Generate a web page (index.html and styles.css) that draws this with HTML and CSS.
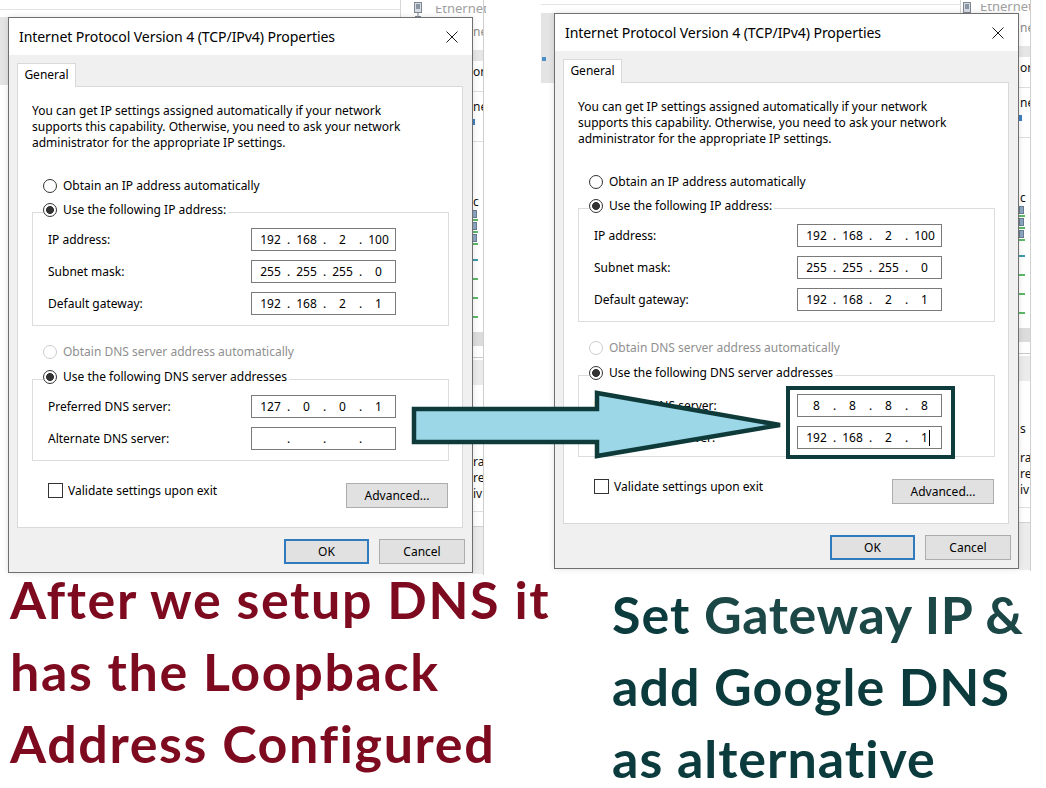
FILE: index.html
```html
<!DOCTYPE html>
<html lang="en">
<head>
<meta charset="utf-8">
<title>TCP/IPv4 DNS settings</title>
<link rel="stylesheet" href="styles.css">
</head>
<body>
<main class="page">
  <section class="shots">
    <div class="shot shot-a">
      <div class="bg-topline"></div>
      <div class="bg-vline"></div>
      <div class="bg-tool"></div>
      <svg class="bg-net" width="10" height="15" viewBox="0 0 10 15"><rect x="1.5" y="0.5" width="7" height="10" fill="#d8dde3" stroke="#7d8893"/><rect x="3" y="2" width="4" height="5" fill="#8a96a3"/><path d="M5 10.5V14.5M2 14.5H8" stroke="#7d8893"/></svg>
      <div class="bg-eth"><span>Ethernet</span></div>
      <div class="bg-strip">
        <div class="st-txt st-ne1 grey">ne</div>
        <div class="st-band st-b1"></div>
        <div class="st-txt st-ork">ork</div>
        <div class="st-line st-l1"></div>
        <div class="st-txt st-ne2">ne</div>
        <div class="st-blue"></div>
        <div class="st-line st-l2"></div>
        <div class="st-txt st-c">c</div>
        <div class="st-ico"></div>
        <div class="st-green"></div>
        <div class="st-ico"></div>
        <div class="st-green"></div>
        <div class="st-ico"></div>
        <div class="st-green"></div>
        <div class="st-green st-gteal"></div>
        <div class="st-green st-gl"></div>
        <div class="st-green st-gl"></div>
        <div class="st-green st-gl"></div>
        <div class="st-band st-b2"></div>
        <div class="st-line st-l3"></div>
        <div class="st-band st-b3"></div>
        <div class="st-txt st-s">s</div>
        <div class="st-txt st-ra">ra</div>
        <div class="st-txt st-re">re</div>
        <div class="st-txt st-iv">iv</div>
        <div class="st-line st-l4"></div>
        <div class="st-band st-b4"></div>
      </div>

      <div class="dlg">
        <div class="titlebar">
          <span class="title">Internet Protocol Version 4 (TCP/IPv4) Properties</span>
          <svg class="close" width="12" height="12" viewBox="0 0 12 12"><path d="M0.5 0.5L11.5 11.5M11.5 0.5L0.5 11.5" stroke="#1a1a1a" stroke-width="1"/></svg>
        </div>
        <div class="dbody">
          <div class="tab">General</div>
          <div class="panel">
            <p class="intro">You can get IP settings assigned automatically if your network<br>supports this capability. Otherwise, you need to ask your network<br>administrator for the appropriate IP settings.</p>
            <div class="radio-row r-ip"><span class="radio"></span>Obtain an IP address automatically</div>
            <div class="group g-ip">
              <div class="legend"><span class="radio on"></span>Use the following IP address:</div>
              <div class="field"><span class="flabel">IP address:</span><span class="ipbox"><span class="oct">192</span><span class="dot">.</span><span class="oct">168</span><span class="dot">.</span><span class="oct">2</span><span class="dot">.</span><span class="oct">100</span></span></div>
              <div class="field"><span class="flabel">Subnet mask:</span><span class="ipbox"><span class="oct">255</span><span class="dot">.</span><span class="oct">255</span><span class="dot">.</span><span class="oct">255</span><span class="dot">.</span><span class="oct">0</span></span></div>
              <div class="field"><span class="flabel">Default gateway:</span><span class="ipbox"><span class="oct">192</span><span class="dot">.</span><span class="oct">168</span><span class="dot">.</span><span class="oct">2</span><span class="dot">.</span><span class="oct">1</span></span></div>
            </div>
            <div class="radio-row dis r-dns"><span class="radio"></span>Obtain DNS server address automatically</div>
            <div class="group g-dns">
              <div class="legend"><span class="radio on"></span>Use the following DNS server addresses</div>
              <div class="field"><span class="flabel">Preferred DNS server:</span><span class="ipbox"><span class="oct">127</span><span class="dot">.</span><span class="oct">0</span><span class="dot">.</span><span class="oct">0</span><span class="dot">.</span><span class="oct">1</span></span></div>
              <div class="field"><span class="flabel">Alternate DNS server:</span><span class="ipbox"><span class="oct"></span><span class="dot">.</span><span class="oct"></span><span class="dot">.</span><span class="oct"></span><span class="dot">.</span><span class="oct"></span></span></div>
            </div>
            <div class="bottom-row">
              <div class="check"><span class="box"></span>Validate settings upon exit</div>
              <span class="btn adv">Advanced...</span>
            </div>
          </div>
        </div>
        <div class="footer"><span class="btn ok">OK</span><span class="btn cancel">Cancel</span></div>
      </div>
    </div>

    <div class="shot shot-b">
      <div class="bg-topline"></div>
      <div class="bg-vline"></div>
      <div class="bg-tool"><span class="bg-tool-ico"></span></div>
      <svg class="bg-net" width="10" height="15" viewBox="0 0 10 15"><rect x="1.5" y="0.5" width="7" height="10" fill="#d8dde3" stroke="#7d8893"/><rect x="3" y="2" width="4" height="5" fill="#8a96a3"/><path d="M5 10.5V14.5M2 14.5H8" stroke="#7d8893"/></svg>
      <div class="bg-eth"><span>Ethernet</span></div>
      <div class="bg-strip">
        <div class="st-txt st-ne1 grey">ne</div>
        <div class="st-band st-b1"></div>
        <div class="st-txt st-ork">orl</div>
        <div class="st-line st-l1"></div>
        <div class="st-txt st-ne2">ne</div>
        <div class="st-blue"></div>
        <div class="st-line st-l2"></div>
        <div class="st-txt st-c">c</div>
        <div class="st-ico"></div>
        <div class="st-green"></div>
        <div class="st-ico"></div>
        <div class="st-green"></div>
        <div class="st-ico"></div>
        <div class="st-green"></div>
        <div class="st-green st-gteal"></div>
        <div class="st-green st-gl"></div>
        <div class="st-green st-gl"></div>
        <div class="st-green st-gl"></div>
        <div class="st-band st-b2"></div>
        <div class="st-line st-l3"></div>
        <div class="st-band st-b3"></div>
        <div class="st-txt st-s">s</div>
        <div class="st-txt st-ra">ra</div>
        <div class="st-txt st-re">re</div>
        <div class="st-txt st-iv">iv</div>
        <div class="st-line st-l4"></div>
        <div class="st-band st-b4"></div>
      </div>

      <div class="dlg">
        <div class="titlebar">
          <span class="title">Internet Protocol Version 4 (TCP/IPv4) Properties</span>
          <svg class="close" width="12" height="12" viewBox="0 0 12 12"><path d="M0.5 0.5L11.5 11.5M11.5 0.5L0.5 11.5" stroke="#1a1a1a" stroke-width="1"/></svg>
        </div>
        <div class="dbody">
          <div class="tab">General</div>
          <div class="panel">
            <p class="intro">You can get IP settings assigned automatically if your network<br>supports this capability. Otherwise, you need to ask your network<br>administrator for the appropriate IP settings.</p>
            <div class="radio-row r-ip"><span class="radio"></span>Obtain an IP address automatically</div>
            <div class="group g-ip">
              <div class="legend"><span class="radio on"></span>Use the following IP address:</div>
              <div class="field"><span class="flabel">IP address:</span><span class="ipbox"><span class="oct">192</span><span class="dot">.</span><span class="oct">168</span><span class="dot">.</span><span class="oct">2</span><span class="dot">.</span><span class="oct">100</span></span></div>
              <div class="field"><span class="flabel">Subnet mask:</span><span class="ipbox"><span class="oct">255</span><span class="dot">.</span><span class="oct">255</span><span class="dot">.</span><span class="oct">255</span><span class="dot">.</span><span class="oct">0</span></span></div>
              <div class="field"><span class="flabel">Default gateway:</span><span class="ipbox"><span class="oct">192</span><span class="dot">.</span><span class="oct">168</span><span class="dot">.</span><span class="oct">2</span><span class="dot">.</span><span class="oct">1</span></span></div>
            </div>
            <div class="radio-row dis r-dns"><span class="radio"></span>Obtain DNS server address automatically</div>
            <div class="group g-dns g-edit">
              <div class="legend"><span class="radio on"></span>Use the following DNS server addresses</div>
              <div class="field"><span class="flabel">Preferred DNS server:</span><span class="ipbox"><span class="oct">8</span><span class="dot">.</span><span class="oct">8</span><span class="dot">.</span><span class="oct">8</span><span class="dot">.</span><span class="oct">8</span></span></div>
              <div class="field"><span class="flabel">Alternate DNS server:</span><span class="ipbox"><span class="oct">192</span><span class="dot">.</span><span class="oct">168</span><span class="dot">.</span><span class="oct">2</span><span class="dot">.</span><span class="oct">1<span class="caret"></span></span></span></div>
            </div>
            <div class="bottom-row">
              <div class="check"><span class="box"></span>Validate settings upon exit</div>
              <span class="btn adv">Advanced...</span>
            </div>
          </div>
        </div>
        <div class="footer"><span class="btn ok">OK</span><span class="btn cancel">Cancel</span></div>
      </div>
    </div>

    <div class="hilite"></div>
    <svg class="arrow" width="376" height="74" viewBox="0 0 376 74">
      <polygon points="4,20 187,20 187,4 370,36 187,67 187,53 4,53" fill="#9bd7e7" stroke="#0e3a3a" stroke-width="4.5" stroke-linejoin="miter"/>
    </svg>
  </section>

  <section class="captions">
    <p class="cap cap-red">After we setup DNS it<br>has the Loopback<br>Address Configured</p>
    <p class="cap cap-teal">Set <span class="cap-soft">Gateway IP &amp;</span><br>add Google DNS<br>as alternative</p>
  </section>
</main>
</body>
</html>
```

FILE: styles.css
```css
* { box-sizing: border-box; }

body {
  margin: 0;
  background: #ffffff;
  width: 1046px;
  height: 788px;
  overflow: hidden;
}

.page {
  position: relative;
  width: 1046px;
  height: 788px;
}

/* ---------- screenshot panels ---------- */
.shots {
  position: relative;
  display: flex;
  height: 576px;
}

.shot {
  position: relative;
  flex: none;
  overflow: hidden;
  height: 580px;
  background: #ffffff;
}

.shot-a { width: 486px; }

.shot-b {
  width: 490px;
  margin-left: 55px;
  margin-top: -4px;
  height: 584px;
}

/* desktop background fragments */
.bg-topline {
  position: absolute;
  left: 0;
  top: 9px;
  width: 400px;
  height: 1px;
  background: #e3e3e3;
}
.shot-b .bg-topline { width: 419px; top: 8px; }

.bg-vline {
  position: absolute;
  left: 400px;
  top: 0;
  width: 1px;
  height: 17px;
  background: #d6d6d6;
}
.shot-b .bg-vline { left: 419px; }

.bg-tool {
  position: absolute;
  left: 0;
  top: 17px;
  width: 20px;
  height: 68px;
  background: #e4e4e4;
}
.shot-b .bg-tool { top: 17px; height: 70px; }

.bg-tool-ico {
  display: block;
  margin: 44px 0 0 1px;
  width: 4px;
  height: 4px;
  background: #4f8fc9;
}

.bg-net {
  position: absolute;
  left: 413px;
  top: 2px;
}
.shot-b .bg-net { left: 421px; top: 6px; }

.bg-eth {
  position: absolute;
  left: 435px;
  top: 6px;
  height: 12px;
  overflow: hidden;
  font: 13px/1 "Noto Sans", sans-serif;
  color: #a0a0a0;
}
.bg-eth span { display: block; margin-top: -4px; }
.shot-b .bg-eth { left: 439px; top: 8px; }

.bg-strip {
  position: absolute;
  left: 472px;
  top: 0;
  width: 12px;
  height: 575px;
  border-right: 1px solid #cfcfcf;
  overflow: hidden;
  display: flex;
  flex-direction: column;
  font: 12px "Noto Sans", sans-serif;
  color: #111;
}
.shot-b .bg-strip { left: 478px; }

.st-txt { height: 15px; line-height: 15px; white-space: nowrap; padding-left: 1px; }
.st-txt.grey { color: #8a8a8a; }
.st-band { background: #e6e6e6; flex: none; }
.st-line { height: 1px; background: #dedede; flex: none; }
.st-ne1 { margin-top: 24px; }
.st-b1 { margin-top: 11px; height: 11px; }
.st-ork { margin-top: 3px; }
.st-l1 { margin-top: 12px; }
.st-ne2 { margin-top: 7px; }
.st-blue { margin-top: 5px; width: 3px; height: 6px; background: #3f7fc2; flex: none; }
.st-l2 { margin-top: 16px; }
.st-c { margin-top: 52px; }
.st-ico { margin-top: 1px; width: 5px; height: 8px; background: #8aa7c4; border: 1px solid #6a7c8e; flex: none; }
.st-green { margin-top: 1px; width: 6px; height: 2px; background: #5cb867; flex: none; }
.st-gteal { margin-top: 14px; background: #3c9aa6; }
.st-gl { margin-top: 17px; }
.st-b2 { margin-top: 14px; height: 14px; background: #dcdcdc; }
.st-l3 { margin-top: 11px; background: #c8c8c8; }
.st-b3 { margin-top: 2px; height: 25px; background: #ebebeb; }
.st-s { margin-top: 40px; }
.st-ra { margin-top: 14px; }
.st-re { margin-top: 1px; }
.st-iv { margin-top: 1px; }
.st-l4 { margin-top: 10px; }
.st-b4 { margin-top: 14px; height: 48px; background: #ececec; border-top: 1px solid #d2d2d2; }

/* ---------- dialog ---------- */
.dlg {
  position: absolute;
  top: 17px;
  left: 8px;
  z-index: 2;
  width: 465px;
  height: 556px;
  border: 1px solid #6f6f6f;
  background: #f0f0f0;
  display: flex;
  flex-direction: column;
  font: 12px/16px "Noto Sans", sans-serif;
  color: #000;
  box-shadow: 0 0 6px rgba(0, 0, 0, 0.12);
}
.shot-b .dlg { left: 13px; }

.titlebar {
  flex: none;
  height: 37px;
  background: #ffffff;
  display: flex;
  align-items: center;
  justify-content: space-between;
  padding: 0 14px 0 10px;
}

.title {
  font-size: 14.1px;
  letter-spacing: -0.1px;
  color: #000;
}

.close { display: block; }

.dbody {
  flex: none;
  padding: 8px 9px 0 8px;
  display: flex;
  flex-direction: column;
}

.tab {
  position: relative;
  z-index: 1;
  width: 59px;
  height: 24px;
  margin-bottom: -1px;
  background: #ffffff;
  border: 1px solid #d9d9d9;
  border-bottom: none;
  text-align: center;
  line-height: 22px;
}

.panel {
  width: 446px;
  height: 442px;
  background: #ffffff;
  border: 1px solid #d9d9d9;
  padding: 16px 13px 0 14px;
  display: flex;
  flex-direction: column;
}

.intro {
  margin: 0;
  line-height: 16px;
  white-space: nowrap;
}

.radio-row {
  display: flex;
  align-items: center;
  height: 16px;
  margin-left: 11px;
  white-space: nowrap;
}
.r-ip { margin-top: 27px; }
.r-dns { margin-top: 18px; }
.radio-row.dis { color: #8f8f8f; }

.radio {
  flex: none;
  width: 14px;
  height: 14px;
  margin-right: 6px;
  border: 1px solid #333;
  border-radius: 50%;
  background: #ffffff;
}
.radio.on { background: radial-gradient(circle, #333 0 3.6px, #ffffff 4.3px); }
.dis .radio { border-color: #cccccc; }

.group {
  border: 1px solid #dcdcdc;
  padding: 0 0 10px 15px;
  display: flex;
  flex-direction: column;
  gap: 9px;
}
.g-ip { margin-top: 18px; }
.g-dns { margin-top: 19px; }

.legend {
  display: flex;
  align-items: center;
  width: fit-content;
  height: 16px;
  margin: -11px 0 1px -5px;
  padding-right: 2px;
  background: #ffffff;
  white-space: nowrap;
}

/* edited fields in the second screenshot sit a few px lower */
.g-edit { padding-bottom: 7px; }
.g-edit .legend { margin-bottom: 4px; }

.field {
  display: flex;
  align-items: center;
  height: 23px;
}

.flabel { width: 203px; flex: none; white-space: nowrap; }

.ipbox {
  display: flex;
  align-items: center;
  width: 145px;
  height: 23px;
  border: 1px solid #7a7a7a;
  padding-left: 4px;
  background: #ffffff;
}

.oct {
  position: relative;
  width: 29px;
  text-align: center;
}

.dot {
  width: 7px;
  text-align: center;
}

.caret {
  position: absolute;
  top: 0;
  right: 9px;
  width: 1px;
  height: 16px;
  background: #000;
}

.bottom-row {
  display: flex;
  justify-content: space-between;
  align-items: flex-start;
  margin-top: 22px;
}

.check {
  display: flex;
  align-items: center;
  height: 15px;
  margin-left: 16px;
  white-space: nowrap;
}

.box {
  width: 15px;
  height: 15px;
  margin-right: 5px;
  border: 1px solid #333;
  background: #ffffff;
}

.btn {
  display: flex;
  align-items: center;
  justify-content: center;
  height: 25px;
  background: #e1e1e1;
  border: 1px solid #adadad;
}

.adv { width: 102px; margin-right: 1px; }

.footer {
  flex: none;
  display: flex;
  justify-content: flex-end;
  gap: 10px;
  margin-top: 11px;
  padding-right: 7px;
}

.ok { width: 85px; border: 2px solid #2f7bbd; }
.cancel { width: 86px; }

/* ---------- overlays ---------- */
.hilite {
  position: absolute;
  z-index: 3;
  left: 786px;
  top: 386px;
  width: 169px;
  height: 73px;
  border: 4px solid #0e3b3b;
}

.arrow {
  position: absolute;
  z-index: 4;
  left: 410px;
  top: 389px;
}

/* ---------- captions ---------- */
.captions {
  display: flex;
}

.cap {
  margin: 0;
  font: 700 52px/72px Lato, "Noto Sans", sans-serif;
  white-space: nowrap;
}

.cap-red {
  width: 600px;
  margin-left: 10px;
  margin-top: -13px;
  letter-spacing: 1.6px;
  color: #7e0a1f;
}

.cap-teal {
  margin-left: 2px;
  margin-top: 2px;
  letter-spacing: 1px;
  color: #0b3b3d;
}

.cap-soft { color: #1c4747; letter-spacing: 0.6px; }
```
